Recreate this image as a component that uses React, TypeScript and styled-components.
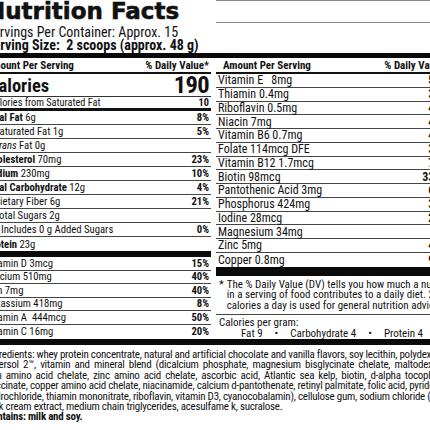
import React from "react";
import styled, { createGlobalStyle } from "styled-components";

const narrow = `"Roboto Condensed", "Open Sans", sans-serif`;

const GlobalStyle = createGlobalStyle`
  html, body {
    margin: 0;
    padding: 0;
    background: #ffffff;
    overflow: hidden;
  }
`;

const Viewport = styled.div`
  width: 430px;
  height: 430px;
  overflow: hidden;
  background: #ffffff;
`;

const Label = styled.div`
  width: 466px;
  margin-left: -16px;
  font-family: ${narrow};
  font-stretch: condensed;
  font-size: 11px;
  color: #111;
`;

const TopGrid = styled.div`
  display: grid;
  grid-template-columns: 227px 234px;
  column-gap: 5px;
`;

const TitleBlock = styled.div`
  padding-left: 2px;
  height: 53px;
`;

const Title = styled.h1`
  margin: 0;
  height: 22px;
  font-family: "DejaVu Sans", sans-serif;
  font-stretch: normal;
  font-weight: 700;
  font-size: 23px;
  line-height: 22px;
  -webkit-text-stroke: 0.6px #111;
  white-space: nowrap;
`;

const ServingLine = styled.div<{ $bold?: boolean }>`
  font-size: 14px;
  line-height: 13px;
  font-weight: ${(p) => (p.$bold ? 700 : 400)};
  white-space: pre;
  &:first-of-type {
    margin-top: 4px;
  }
`;

const TopRule = styled.div`
  height: 21px;
  border-top: 1px solid #8a8a8a;
  border-bottom: 1px solid #8a8a8a;
`;

const Bar = styled.div<{ $h: number }>`
  height: ${(p) => p.$h}px;
  background: #0a0a0a;
`;

const Columns = styled.div`
  display: grid;
  grid-template-columns: 227px 234px;
  column-gap: 5px;
`;

const Column = styled.div<{ $size: number }>`
  display: flex;
  flex-direction: column;
  font-size: ${(p) => p.$size}px;
`;

const HeadRow = styled.div<{ $pad: number }>`
  display: flex;
  justify-content: space-between;
  align-items: center;
  height: 14px;
  padding: 0 2px 0 ${(p) => p.$pad}px;
  border-bottom: 2px solid #111;
  font-size: 11px;
  font-weight: 700;
  white-space: nowrap;
`;

const CaloriesRow = styled.div`
  display: flex;
  justify-content: space-between;
  align-items: flex-end;
  height: 22px;
  padding: 0 2px 0 4px;
  border-bottom: 1px solid #333;
  font-weight: 700;
`;

const CalLabel = styled.span`
  font-size: 18.5px;
  line-height: 20px;
`;

const CalValue = styled.span`
  font-size: 24.5px;
  line-height: 22px;
  letter-spacing: -0.6px;
`;

const Row = styled.div<{ $h: number; $indent?: number; $heavy?: boolean; $open?: boolean; $small?: boolean }>`
  display: flex;
  justify-content: space-between;
  align-items: center;
  box-sizing: border-box;
  height: ${(p) => p.$h}px;
  padding: 0 2px 0 ${(p) => 2 + (p.$indent ?? 0)}px;
  border-bottom: ${(p) => (p.$open ? "none" : p.$heavy ? "3px solid #111" : "1px solid #444")};
  font-size: ${(p) => (p.$small ? "10.3px" : "inherit")};
  white-space: pre;
`;

const Pct = styled.span`
  font-weight: 700;
`;

const Footnote = styled.div`
  display: flex;
  gap: 3px;
  padding: 4px 2px 3px 3px;
  border-bottom: 1px solid #444;
  font-size: 11px;
  line-height: 10.5px;
  white-space: nowrap;
`;

const PerGram = styled.div`
  flex: 1;
  padding: 3px 2px 0 3px;
  font-size: 11px;
  line-height: 10.5px;
`;

const GramLine = styled.div`
  display: flex;
  gap: 12px;
  padding-left: 22px;
  white-space: nowrap;
`;

const Ingredients = styled.div`
  padding: 5px 2px 0 2px;
  font-size: 11px;
  letter-spacing: -0.25px;
`;

const IngLine = styled.div<{ $last?: boolean; $bold?: boolean }>`
  height: 10.4px;
  line-height: 10.4px;
  text-align: ${(p) => (p.$last ? "left" : "justify")};
  text-align-last: ${(p) => (p.$last ? "left" : "justify")};
  font-weight: ${(p) => (p.$bold ? 700 : 400)};
  white-space: nowrap;
`;

type Item = { label: React.ReactNode; pct?: string; indent?: number };

const nutrients: Item[] = [
  { label: <><b>Total Fat</b> 6g</>, pct: "8%" },
  { label: "Saturated Fat 1g", pct: "5%", indent: 8 },
  { label: <><i>Trans</i> Fat 0g</>, indent: 8 },
  { label: <><b>Cholesterol</b> 70mg</>, pct: "23%" },
  { label: <><b>Sodium</b> 230mg</>, pct: "10%" },
  { label: <><b>Total Carbohydrate</b> 12g</>, pct: "4%" },
  { label: "Dietary Fiber 6g", pct: "21%", indent: 8 },
  { label: "Total Sugars 2g", indent: 8 },
  { label: "Includes 0 g Added Sugars", pct: "0%", indent: 15 },
  { label: <><b>Protein</b> 23g</> },
];

const minerals: Item[] = [
  { label: "Vitamin D 3mcg", pct: "15%" },
  { label: "Calcium 510mg", pct: "40%" },
  { label: "Iron 7mg", pct: "40%" },
  { label: "Potassium 418mg", pct: "8%" },
  { label: "Vitamin A  444mcg", pct: "50%" },
  { label: "Vitamin C 16mg", pct: "20%" },
];

const vitamins: Item[] = [
  { label: "Vitamin E   8mg", pct: "53%" },
  { label: "Thiamin 0.4mg", pct: "33%" },
  { label: "Riboflavin 0.5mg", pct: "42%" },
  { label: "Niacin 7mg", pct: "44%" },
  { label: "Vitamin B6 0.7mg", pct: "41%" },
  { label: "Folate 114mcg DFE", pct: "30%" },
  { label: "Vitamin B12 1.7mcg", pct: "71%" },
  { label: "Biotin 98mcg", pct: "330%" },
  { label: "Pantothenic Acid 3mg", pct: "60%" },
  { label: "Phosphorus 424mg", pct: "34%" },
  { label: "Iodine 28mcg", pct: "20%" },
  { label: "Magnesium 34mg", pct: "8%" },
  { label: "Zinc 5mg", pct: "45%" },
  { label: "Copper 0.8mg", pct: "90%" },
];

const ingredientLines = [
  "Ingredients: whey protein concentrate, natural and artificial chocolate and vanilla flavors, soy lecithin, polydextrose,",
  "Fibersol 2™, vitamin and mineral blend (dicalcium phosphate, magnesium bisglycinate chelate, maltodextrin,",
  "iron amino acid chelate, zinc amino acid chelate, ascorbic acid, Atlantic sea kelp, biotin, d-alpha tocopheryl",
  "succinate, copper amino acid chelate, niacinamide, calcium d-pantothenate, retinyl palmitate, folic acid, pyridoxine",
  "hydrochloride, thiamin mononitrate, riboflavin, vitamin D3, cyanocobalamin), cellulose gum, sodium chloride (salt),",
];

function Rows({ items, h }: { items: Item[]; h: number }) {
  return (
    <>
      {items.map((it, i) => (
        <Row key={i} $h={h} $indent={it.indent} $open={i === items.length - 1}>
          <span>{it.label}</span>
          {it.pct && <Pct>{it.pct}</Pct>}
        </Row>
      ))}
    </>
  );
}

export default function App() {
  return (
    <Viewport>
      <GlobalStyle />
      <Label>
        <TopGrid>
          <TitleBlock>
            <Title>Nutrition Facts</Title>
            <ServingLine>Servings Per Container: Approx. 15</ServingLine>
            <ServingLine $bold>{"Serving Size:  2 scoops (approx. 48 g)"}</ServingLine>
          </TitleBlock>
          <TopRule />
        </TopGrid>
        <Bar $h={5} />
        <Columns>
          <Column $size={10.7}>
            <HeadRow $pad={2}>
              <span>Amount Per Serving</span>
              <span>% Daily Value*</span>
            </HeadRow>
            <CaloriesRow>
              <CalLabel>Calories</CalLabel>
              <CalValue>190</CalValue>
            </CaloriesRow>
            <Row $h={14} $indent={3} $heavy $small>
              <span>Calories from Saturated Fat</span>
              <Pct>10</Pct>
            </Row>
            <Rows items={nutrients} h={14} />
            <Bar $h={6} />
            <Rows items={minerals} h={13.5} />
          </Column>
          <Column $size={12}>
            <HeadRow $pad={7}>
              <span>Amount Per Serving</span>
              <span>% Daily Value*</span>
            </HeadRow>
            <Rows items={vitamins} h={13.75} />
            <Bar $h={9} />
            <Footnote>
              <span>*</span>
              <span>
                The % Daily Value (DV) tells you how much a nutrient
                <br />
                in a serving of food contributes to a daily diet. 2,000
                <br />
                calories a day is used for general nutrition advice.
              </span>
            </Footnote>
            <PerGram>
              <div>Calories per gram:</div>
              <GramLine>
                <span>Fat 9</span>
                <span>•</span>
                <span>Carbohydrate 4</span>
                <span>•</span>
                <span>Protein 4</span>
              </GramLine>
            </PerGram>
          </Column>
        </Columns>
        <Bar $h={6} />
        <Ingredients>
          {ingredientLines.map((l, i) => (
            <IngLine key={i}>{l}</IngLine>
          ))}
          <IngLine $last>milk cream extract, medium chain triglycerides, acesulfame k, sucralose.</IngLine>
          <IngLine $last $bold>Contains: milk and soy.</IngLine>
        </Ingredients>
      </Label>
    </Viewport>
  );
}
